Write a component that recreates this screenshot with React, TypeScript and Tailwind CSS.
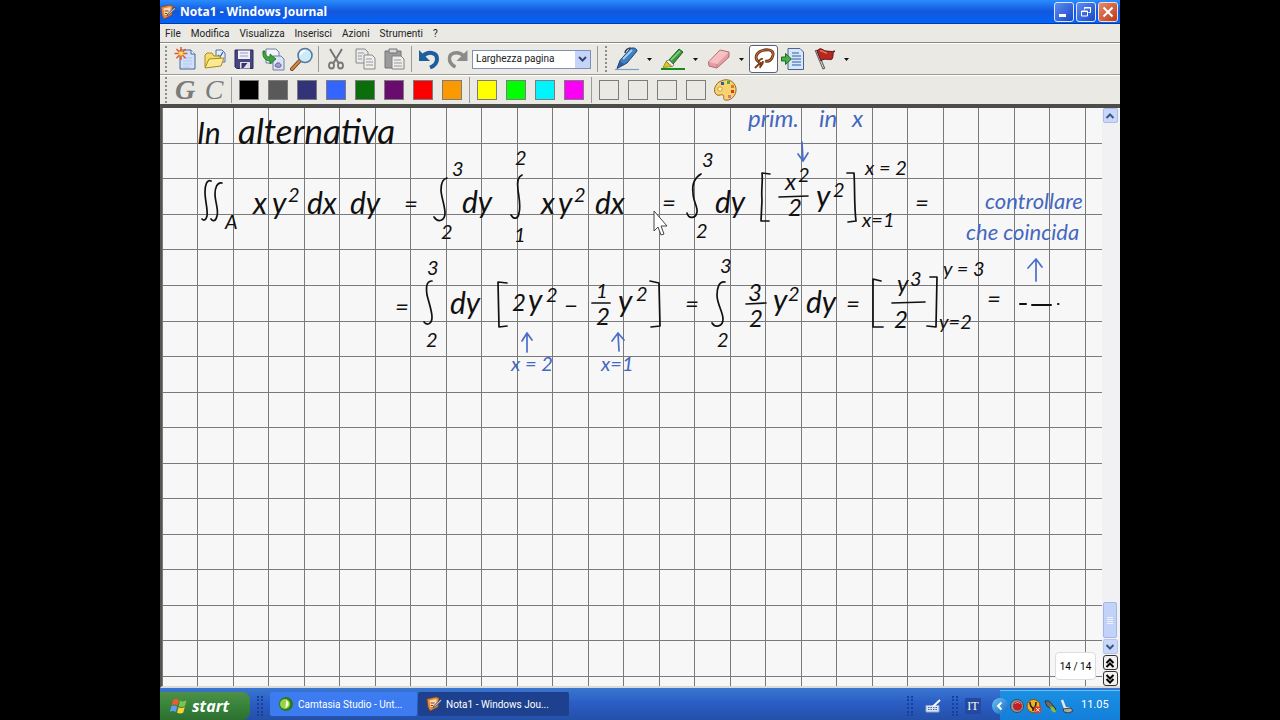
import React from "react";

type Kids = { children?: React.ReactNode };

const Icon = ({ children, size = "size-6" }: Kids & { size?: string }) => (
  <svg viewBox="0 0 24 24" className={`${size} shrink-0`} fill="none" aria-hidden="true">
    {children}
  </svg>
);

const Tool = ({ label, children, width = "w-[29px]" }: Kids & { label: string; width?: string }) => (
  <button aria-label={label} className={`flex h-7 shrink-0 items-center justify-center ${width}`}>
    {children}
  </button>
);

const Grip = () => (
  <div className="flex w-[11px] shrink-0 justify-center">
    <div className="h-[26px] border-l-2 border-dotted border-[#8d8d8a]" />
  </div>
);

const Sep = ({ width = "w-[5px]" }: { width?: string }) => (
  <div className={`flex shrink-0 justify-center ${width}`}>
    <div className="h-[26px] w-px bg-[#9a9a98]" />
  </div>
);

const More = ({ label }: { label: string }) => (
  <button aria-label={label} className="flex h-7 w-[15px] shrink-0 items-center justify-center">
    <svg viewBox="0 0 5 3" className="h-[3px] w-[5px]" aria-hidden="true">
      <path d="M0 0h5L2.500 3z" fill="#111" />
    </svg>
  </button>
);

const Swatch = ({ name, color }: { name: string; color: string }) => (
  <Tool label={name}>
    <span className={`block size-5 border border-[#7b7b80] ${color}`} />
  </Tool>
);

const JournalIcon = ({ size = "size-4" }: { size?: string }) => (
  <svg viewBox="0 0 16 16" className={`${size} shrink-0`} aria-hidden="true">
    <path d="M1 3l9-2 3 1-1 9-8 4-2-4z" fill="#e8893a" stroke="#8a3f12" strokeWidth=".7" />
    <path d="M3.500 4.500l7-1.500 0 4-4 4-2 0z" fill="#f8d9b8" />
    <path d="M4.500 7h4M5 9.500h2" stroke="#8a3f12" />
    <path d="M15 3L8 9.500l-1 2 2.200-.8L15.500 5z" fill="#b9c3d6" stroke="#333b55" strokeWidth=".7" />
  </svg>
);

const blacks = [
  ["Nero", "bg-black"],
  ["Grigio", "bg-[#595959]"],
  ["Blu scuro", "bg-[#333377]"],
  ["Blu", "bg-[#3366ff]"],
  ["Verde", "bg-[#0b6e0b]"],
  ["Viola", "bg-[#6a0c6e]"],
  ["Rosso", "bg-[#fb0000]"],
  ["Arancione", "bg-[#fb9a00]"],
];
const brights = [
  ["Giallo", "bg-[#ffff00]"],
  ["Verde chiaro", "bg-[#00ff00]"],
  ["Celeste", "bg-[#00f4fb]"],
  ["Fucsia", "bg-[#fb00f4]"],
];
const empties = ["Personalizzato 1", "Personalizzato 2", "Personalizzato 3", "Personalizzato 4"];

function TitleBar() {
  return (
    <header className="flex h-6 shrink-0 items-center border-b border-[#0b3a9c] bg-linear-to-b from-[#2b8cff] via-[#1257dc] to-[#0064fb] pr-[2px]">
      <JournalIcon />
      <h1 className="grow pl-1 font-['Noto_Sans'] text-[12px] leading-5 font-bold text-white">
        Nota1 - Windows Journal
      </h1>
      <div className="flex gap-[2px]">
        <button aria-label="Riduci a icona" className="flex size-5 items-end justify-start rounded-[3px] border border-[#dbe7ff] bg-linear-to-br from-[#5e8cf0] to-[#1947c9] p-1">
          <span className="h-[3px] w-[7px] bg-white" />
        </button>
        <button aria-label="Ripristina" className="flex size-5 items-center justify-center rounded-[3px] border border-[#dbe7ff] bg-linear-to-br from-[#5e8cf0] to-[#1947c9]">
          <svg viewBox="0 0 12 12" className="size-3" fill="none" stroke="white" aria-hidden="true">
            <path d="M4.500 3.500v-2h6v5h-2M4 2h7M1.500 5h6v5h-6zM1.500 5.500h6" />
          </svg>
        </button>
        <button aria-label="Chiudi" className="flex size-5 items-center justify-center rounded-[3px] border border-[#f5ddd5] bg-linear-to-br from-[#e58a6c] to-[#b93a15]">
          <svg viewBox="0 0 12 12" className="size-3" stroke="white" strokeWidth="2" aria-hidden="true">
            <path d="M1.500 1.500l9 9M10.500 1.500l-9 9" />
          </svg>
        </button>
      </div>
    </header>
  );
}

function MenuBar() {
  return (
    <nav className="flex h-[19px] shrink-0 items-center gap-[10px] border-b border-[#8a8a85] pl-[5px] text-[10px] text-[#222]">
      {["File", "Modifica", "Visualizza", "Inserisci", "Azioni", "Strumenti", "?"].map((m) => (
        <button key={m}>{m}</button>
      ))}
    </nav>
  );
}

function MainTools() {
  return (
    <div className="flex h-8 shrink-0 items-center border-t border-b border-t-white border-b-[#9b9b98]">
      <Grip />
      <Tool label="Nuova nota">
        <Icon>
          <path d="M6 3h11l4 4v15H6z" fill="#cfe0f8" stroke="#49659c" />
          <path d="M17 3v4h4" fill="#fff" stroke="#49659c" />
          <path d="M9 11h9M9 14h9M9 17h9M9 20h7" stroke="#a8c2ea" strokeWidth=".8" />
          <path d="M7 0v13M.5 6.500h13M2.400 2l9.200 9.200M11.600 2l-9.200 9.200" stroke="#e2592a" strokeWidth="1.500" />
          <circle cx="7" cy="6.500" r="2.300" fill="#ffd54a" />
        </Icon>
      </Tool>
      <Tool label="Apri">
        <Icon>
          <path d="M13 3h6l3 3v9h-9z" fill="#e6effb" stroke="#55709e" />
          <path d="M15 8l2 2 3-5" stroke="#2d66b8" strokeWidth="1.300" />
          <path d="M2 20V8l2-2h5l2 3h6v4" fill="#f5dc6c" stroke="#a98a22" />
          <path d="M2 21l4-9 15-1-3 8z" fill="#fbea8f" stroke="#a98a22" />
        </Icon>
      </Tool>
      <Tool label="Salva">
        <Icon>
          <path d="M3 3h18v18.500H5L3 20z" fill="#47457f" stroke="#2d2b5c" />
          <path d="M6 3.500h12V12H6z" fill="#f0f1f8" />
          <path d="M8 6h8M8 9h8" stroke="#9a9cc0" />
          <path d="M8 15h10v6.500H8z" fill="#dfe0ee" />
          <path d="M9.500 16h6l-4 5h-2z" fill="#35336b" />
        </Icon>
      </Tool>
      <Tool label="Importa">
        <Icon>
          <path d="M5 2h10l3 3v11H5z" fill="#f2f5fb" stroke="#6d7ea6" />
          <path d="M12 9h8l3 3v11H12z" fill="#d8e3f6" stroke="#6d7ea6" />
          <path d="M14 19c1-4 5-4 6-1s-4 3-6 1z" fill="#a79ac6" stroke="#6e5c94" />
          <path d="M2 4c-1 7 3 10 7 10v3l6-5-6-5v3c-3 0-5-2-5-6z" fill="#3ba63a" stroke="#1b6b22" strokeWidth=".8" />
        </Icon>
      </Tool>
      <Tool label="Trova">
        <Icon>
          <path d="M10 13.500l-8 8.500" stroke="#6d3c13" strokeWidth="4" strokeLinecap="round" />
          <path d="M10 13.500l-8 8.500" stroke="#d38a43" strokeWidth="2.200" strokeLinecap="round" />
          <circle cx="15" cy="8.500" r="7" fill="#cdeaf9" stroke="#57799f" strokeWidth="1.600" />
          <path d="M10.500 8a4.500 4.500 0 0 1 5-4" stroke="#fff" strokeWidth="1.800" />
        </Icon>
      </Tool>
      <Sep />
      <Tool label="Taglia">
        <Icon>
          <path d="M6 2l8.500 14M18 2L9.500 16" stroke="#777" strokeWidth="2" />
          <ellipse cx="7.500" cy="18.500" rx="2.500" ry="3" stroke="#777" strokeWidth="1.800" />
          <ellipse cx="16.500" cy="18.500" rx="2.500" ry="3" stroke="#777" strokeWidth="1.800" />
        </Icon>
      </Tool>
      <Tool label="Copia">
        <Icon>
          <path d="M3 2h9l3 3v11H3z" fill="#e9e9e9" stroke="#888" />
          <path d="M5 6h6M5 9h4M5 12h4" stroke="#999" />
          <path d="M11 8h8l3 3v11H11z" fill="#eee" stroke="#888" />
          <path d="M13 12h6M13 15h7M13 18h7" stroke="#999" />
        </Icon>
      </Tool>
      <Tool label="Incolla">
        <Icon>
          <path d="M3 4h16v17H3z" fill="#9b9b9b" stroke="#757575" />
          <path d="M7 2h8v4H7z" fill="#d8d8d8" stroke="#757575" />
          <path d="M10 9h9l3 3v10H10z" fill="#eee" stroke="#808080" />
          <path d="M12 13h7M12 16h8M12 19h8" stroke="#999" />
        </Icon>
      </Tool>
      <Sep width="w-[6px]" />
      <Tool label="Annulla">
        <Icon>
          <path d="M6 9c5-5 14-4 14 3 0 5-3 7-7 8.500" stroke="#1d5e9f" strokeWidth="4" />
          <path d="M2 3v11h11z" fill="#1d5e9f" />
        </Icon>
      </Tool>
      <Tool label="Ripeti">
        <Icon>
          <path d="M18 9C12 3 3 6 3.500 12c0 4 2 6 6 8" stroke="#8b8b8b" strokeWidth="3.500" />
          <path d="M21.500 3v11h-11z" fill="#8b8b8b" />
        </Icon>
      </Tool>
      <div className="grid h-[19px] w-[119px] shrink-0 items-center border border-[#7d90b8] bg-white">
        <select aria-label="Zoom" className="col-start-1 row-start-1 h-full w-full appearance-none bg-transparent pl-[3px] text-[10px] leading-4 text-[#222] outline-none">
          <option>Larghezza pagina</option>
        </select>
        <span className="pointer-events-none col-start-1 row-start-1 flex h-full w-[15px] items-center justify-center justify-self-end bg-[#c5d4f8]">
          <svg viewBox="0 0 9 6" className="h-[6px] w-[9px]" fill="none" stroke="#34466f" strokeWidth="2" aria-hidden="true">
            <path d="M1 1l3.500 3.500L8 1" />
          </svg>
        </span>
      </div>
      <div className="w-1 shrink-0" />
      <Sep />
      <Grip />
      <Tool label="Penna" width="w-[31px]">
        <Icon>
          <path d="M0 22.500h24" stroke="#7f9cc6" strokeWidth="1.200" />
          <path d="M2 21.500l3-8L15 2c2-2 7-1 7 2L12 16z" fill="#3f82c4" stroke="#1c3d6d" />
          <path d="M8 12l9-9" stroke="#a9cdf0" strokeWidth="2" />
          <path d="M2 21.500l3-7 5 3z" fill="#2f5c93" />
          <path d="M10 6c0-3 3-5 6-5" stroke="#333d55" strokeWidth="1.500" />
        </Icon>
      </Tool>
      <More label="Opzioni penna" />
      <Tool label="Evidenziatore" width="w-[31px]">
        <Icon>
          <path d="M0 22h24" stroke="#168b1d" strokeWidth="2" />
          <path d="M7 14L18 2l4 3-10 12z" fill="#3c9b3e" stroke="#1a5e20" />
          <path d="M10 13l9-9" stroke="#8fd48b" strokeWidth="1.500" />
          <path d="M5 14l3-1 5 5-2 2z" fill="#eef0e6" stroke="#777" strokeWidth=".8" />
          <path d="M2 20.500l3-6 6 5z" fill="#e0c51c" stroke="#84761a" strokeWidth=".7" />
        </Icon>
      </Tool>
      <More label="Opzioni evidenziatore" />
      <Tool label="Gomma" width="w-[31px]">
        <Icon>
          <path d="M1.500 15L13 3l9 2v5L10 21l-8-2z" fill="#e79da3" stroke="#b0676f" />
          <path d="M2 15L13 3.500l8.500 2L10 17z" fill="#f6bfc2" />
          <path d="M10 17v4" stroke="#c87b82" />
        </Icon>
      </Tool>
      <More label="Opzioni gomma" />
      <button aria-label="Strumento selezione" aria-pressed="true" className="flex h-7 w-[29px] shrink-0 items-center justify-center rounded-[3px] border border-[#55617d] bg-white">
        <Icon>
          <path d="M7 15C2 12 4 6 9 4s13-2 12 4c-1 5-4 7-8 6" stroke="#622b10" strokeWidth="2.800" />
          <path d="M7 15C2 12 4 6 9 4s13-2 12 4c-1 5-4 7-8 6" stroke="#c07136" strokeWidth="1.200" />
          <path d="M11 12c-3-1-5 3-4 5l-4 4M9 15l-1 6M11 14c0 3-1 4-2 5" stroke="#7d3b16" strokeWidth="1.800" />
        </Icon>
      </button>
      <Tool label="Inserisci spazio">
        <Icon>
          <path d="M7 1.500h12l3.500 3.500v17.500H7z" fill="#d7e6fa" stroke="#4a6294" />
          <path d="M11 6h7M11 9h9M11 12h9M11 15h9M11 18h9" stroke="#315c9f" strokeWidth="1.200" />
          <path d="M.5 10h4V6.500L10.500 12l-6 5.500V14h-4z" fill="#48ae45" stroke="#1c6a27" />
        </Icon>
      </Tool>
      <div className="w-[3px] shrink-0" />
      <Tool label="Contrassegno">
        <Icon>
          <path d="M3 3l8 19" stroke="#5e5e66" strokeWidth="3" />
          <path d="M3.500 4l7 17" stroke="#d8d8df" />
          <path d="M4 4c4-5 6 0 9 0 3 0 5 1 9 0-3 2-1 5-3 8-3 2-7-2-11 2z" fill="#b5281f" stroke="#5f1410" />
          <path d="M7 4c3-1 4 2 7 2" stroke="#e27464" strokeWidth="1.500" />
        </Icon>
      </Tool>
      <More label="Opzioni contrassegno" />
    </div>
  );
}

function ColorTools() {
  return (
    <div className="flex h-[29px] shrink-0 items-center border-t border-white">
      <Grip />
      <button aria-label="Grassetto" className="w-7 shrink-0 font-['Liberation_Serif',serif] text-[28px] leading-7 font-bold text-[#7b7b7b] italic">
        G
      </button>
      <button aria-label="Corsivo" className="w-[30px] shrink-0 font-['Liberation_Serif',serif] text-[28px] leading-7 text-[#7b7b7b] italic">
        C
      </button>
      <Sep />
      {blacks.map(([n, c]) => (
        <Swatch key={n} name={n} color={c} />
      ))}
      <Sep width="w-[6px]" />
      {brights.map(([n, c]) => (
        <Swatch key={n} name={n} color={c} />
      ))}
      <Sep width="w-[6px]" />
      {empties.map((n) => (
        <Swatch key={n} name={n} color="bg-transparent" />
      ))}
      <Tool label="Altri colori">
        <Icon>
          <path d="M8 3c8-4 16 2 15 10-1 7-7 10-11 9-3-1 0-4-2-5s-3 1-6 0C-1 14 2 5 8 3z" fill="#f7d36c" stroke="#9a6a21" />
          <circle cx="7" cy="11" r="2.200" fill="#fff6c8" stroke="#b98b31" strokeWidth=".8" />
          <path d="M8 4h3v3H8z" fill="#2a5cab" />
          <path d="M14 3h3v3h-3z" fill="#4eab3f" />
          <path d="M18 7h3v3h-3z" fill="#e07820" />
          <path d="M18 12h3v3h-3z" fill="#cf3a2b" />
          <path d="M15 17h3v3h-3z" fill="#e36aa5" />
        </Icon>
      </Tool>
    </div>
  );
}

/* Ruling pitch is about 35.5px, snapped to whole pixels. */
const columns = Array.from({ length: 60 }, (_, i) => Math.round(35.4 + (i - 1) * 35.5));
const rows = Array.from({ length: 40 }, (_, i) => Math.round(34.9 + i * 35.52));

type Mark = [x: number, y: number, text: string, size?: "s" | "n" | "m" | "l" | "xl"];

const sizes = {
  s: "text-[20px]",
  n: "text-[22px]",
  m: "text-[24px]",
  l: "text-[30px]",
  xl: "text-[35px]",
};

const ink: Mark[] = [
  [197, 144, "In", "l"],
  [238, 144, "alternativa", "xl"],
  [225, 229, "A", "s"],
  [253, 214, "x", "l"],
  [272, 214, "y", "l"],
  [288, 202, "2", "s"],
  [307, 214, "dx", "l"],
  [350, 214, "dy", "l"],
  [404, 212, "="],
  [452, 176, "3", "s"],
  [441, 239, "2", "s"],
  [462, 213, "dy", "l"],
  [515, 165, "2", "s"],
  [514, 242, "1", "s"],
  [541, 214, "x", "l"],
  [558, 214, "y", "l"],
  [574, 202, "2", "s"],
  [595, 214, "dx", "l"],
  [662, 211, "="],
  [702, 167, "3", "s"],
  [696, 238, "2", "s"],
  [715, 213, "dy", "l"],
  [785, 190, "x", "m"],
  [798, 182, "2", "s"],
  [788, 216, "2", "m"],
  [816, 207, "y", "l"],
  [833, 197, "2", "s"],
  [865, 175, "x = 2", "s"],
  [862, 227, "x=1", "s"],
  [915, 211, "="],
  [395, 315, "="],
  [427, 275, "3", "s"],
  [426, 347, "2", "s"],
  [450, 314, "dy", "l"],
  [512, 311, "2", "m"],
  [528, 311, "y", "l"],
  [546, 302, "2", "s"],
  [564, 314, "−"],
  [596, 298, "1", "s"],
  [596, 325, "2", "m"],
  [618, 312, "y", "l"],
  [636, 301, "2", "s"],
  [685, 312, "="],
  [720, 273, "3", "s"],
  [717, 347, "2", "s"],
  [748, 301, "3", "m"],
  [749, 327, "2", "m"],
  [773, 311, "y", "l"],
  [788, 301, "2", "s"],
  [806, 313, "dy", "l"],
  [846, 312, "="],
  [897, 292, "y", "m"],
  [910, 286, "3", "s"],
  [894, 328, "2", "m"],
  [943, 276, "y = 3", "s"],
  [939, 329, "y=2", "s"],
  [987, 307, "="],
];

const blueInk: Mark[] = [
  [748, 127, "prim.", "m"],
  [819, 127, "in", "m"],
  [852, 127, "x", "m"],
  [985, 209, "controllare", "n"],
  [966, 240, "che coincida", "n"],
  [511, 371, "x = 2", "s"],
  [601, 371, "x=1", "s"],
];

const Marks = ({ list }: { list: Mark[] }) => (
  <>
    {list.map(([x, y, t, s = "m"]) => (
      <text key={`${x}-${y}`} x={x} y={y} className={sizes[s]}>
        {t}
      </text>
    ))}
  </>
);

function Page() {
  return (
    <main className="relative min-w-0 grow bg-[#f8f7f8]">
      <svg className="absolute inset-0 size-full" shapeRendering="crispEdges" stroke="#7b7a7b" aria-hidden="true">
        {columns.map((x) => (
          <line key={x} x1={x + 0.5} x2={x + 0.5} y1="0" y2="100%" />
        ))}
        {rows.map((y) => (
          <line key={y} x1="0" x2="100%" y1={y + 0.5} y2={y + 0.5} />
        ))}
      </svg>
      <svg viewBox="162 108 940 578" className="absolute top-0 left-0 h-[578px] w-[940px] overflow-visible font-['Lato',sans-serif] font-normal italic">
        <g fill="#111">
          <Marks list={ink} />
        </g>
        <g fill="#4468bd">
          <Marks list={blueInk} />
        </g>
        <g fill="none" stroke="#111" strokeWidth="1.700" strokeLinecap="round" strokeLinejoin="round">
          <path d="M211 181c-4-2-6 4-6 11 0 9 3 17 2 24-1 4-3 5-5 3M222 183c-5-1-7 5-7 11 0 8 4 16 2 22-1 5-4 6-6 3" />
          <path d="M447 178c-5 1-6 6-6 12s4 16 4 23c0 8-7 10-11 4" />
          <path d="M522 175c-5 2-5 8-4 15 1 8 3 17 1 23-1 6-5 7-8 2" />
          <path d="M701 174c-7 4-9 11-8 19 0 8 5 14 4 19-1 6-8 8-10 1" />
          <path d="M432 281c-6 0-6 7-5 14 2 8 5 16 5 22 0 7-5 9-8 5" />
          <path d="M725 282c-6-1-8 6-8 13 0 9 6 17 6 24 0 8-8 9-11 4" />
          <path d="M770 174l-8-1c1 8-1 17 0 27l-1 21h8" />
          <path d="M847 173h7c1 15 0 32 2 48l-8 1" />
          <path d="M507 283l-9-1 1 45 8-1" />
          <path d="M650 281l9 2 1 43-9 1" />
          <path d="M881 281l-8-2v48l10 0" />
          <path d="M930 277l7 0-1 50-9-1" />
          <path d="M779 197l29-1M592 303l18 0M746 304l20-1M892 303l33-1" />
          <path d="M1020 304h6M1032 305h19M1058 304h.5" strokeWidth="2" />
        </g>
        <g fill="none" stroke="#4a6fc8" strokeWidth="1.700" strokeLinecap="round" strokeLinejoin="round">
          <path d="M802 142l1 19M798 154l5 7 5-8" />
          <path d="M527 352l0-19M522 341l5-8 5 7" />
          <path d="M619 351l-1-18M612 341l6-8 6 7" />
          <path d="M1036 281v-21M1028 268l8-9 6 8" />
        </g>
        <path d="M654 211v20l4-4 3 8 3-1-3-8h6z" fill="#fff" stroke="#444" />
      </svg>
      <div className="absolute right-[6px] bottom-[6px] flex h-7 w-[41px] items-center justify-center rounded-[4px] border border-[#ddd] bg-white text-[10px] text-black">
        14 / 14
      </div>
    </main>
  );
}

const Chevron = ({ d }: { d: string }) => (
  <svg viewBox="0 0 10 10" className="size-[10px]" fill="none" stroke="currentColor" strokeWidth="2" aria-hidden="true">
    <path d={d} />
  </svg>
);

function Scrollbar() {
  return (
    <aside className="flex w-[18px] shrink-0 flex-col items-center gap-px bg-[#f1f0f2] pr-[2px]">
      <button aria-label="Scorri su" className="flex h-[15px] w-[15px] shrink-0 items-center justify-center rounded-[2px] border border-[#a9bde8] bg-[#c9d8f9] text-[#3d558c]">
        <Chevron d="M1.500 7L5 3.500 8.500 7" />
      </button>
      <div className="grow" />
      <div className="flex h-9 w-[14px] shrink-0 flex-col items-center justify-center gap-px rounded-[2px] border border-[#a3b6e4] bg-[#c3d2f9]">
        {[0, 1, 2, 3].map((i) => (
          <span key={i} className="h-px w-[6px] bg-[#eef3ff]" />
        ))}
      </div>
      <button aria-label="Scorri giù" className="flex h-[15px] w-[15px] shrink-0 items-center justify-center rounded-[2px] border border-[#b5c6ee] bg-[#c9d8f9] text-[#3d558c]">
        <Chevron d="M1.500 3L5 6.500 8.500 3" />
      </button>
      <button aria-label="Pagina precedente" className="flex h-[15px] w-[15px] shrink-0 items-center justify-center rounded-[3px] border border-[#333] bg-[#f1f0ee] text-black">
        <Chevron d="M1.500 5L5 1.500 8.500 5M1.500 9L5 5.500 8.500 9" />
      </button>
      <button aria-label="Pagina successiva" className="flex h-[15px] w-[15px] shrink-0 items-center justify-center rounded-[3px] border border-[#333] bg-[#f1f0ee] text-black">
        <Chevron d="M1.500 1L5 4.500 8.500 1M1.500 5L5 8.500 8.500 5" />
      </button>
    </aside>
  );
}

const TaskGrip = () => (
  <div className="flex w-5 shrink-0 justify-center gap-[2px]">
    <span className="h-5 border-l-2 border-dotted border-[#17409b]" />
    <span className="h-5 border-l-2 border-dotted border-[#17409b]" />
  </div>
);

function Taskbar() {
  return (
    <footer className="flex h-8 shrink-0 items-end bg-linear-to-b from-[#3a76cf] via-[#2a5cc4] to-[#2450a8] text-[10px] text-white">
      <button className="flex h-7 w-[90px] shrink-0 items-center gap-1 rounded-r-[8px] bg-linear-to-b from-[#4e9048] via-[#36833a] to-[#2d6f30] pl-[10px] font-['Open_Sans'] text-[16px] font-bold italic">
        <svg viewBox="0 0 18 18" className="size-[18px]" aria-hidden="true">
          <path d="M3 3c2-1.500 4-1.500 6 0L7.500 8.500c-2-1.300-4-1.300-6 0z" fill="#ee5a2b" />
          <path d="M10 3.500c2 1.200 4 1.200 6.500-.2L15 9c-2 1.200-4 1.200-6.300.2z" fill="#7cc54a" />
          <path d="M1.200 9.500c2-1.300 4-1.300 6 0L5.800 15c-2-1.300-4-1.300-6 0z" fill="#5f9df0" />
          <path d="M8.500 10.200c2 1 4 1 6.300-.2l-1.500 5.600c-2 1.200-4 1.200-6.300.2z" fill="#fbd03b" />
        </svg>
        start
      </button>
      <div className="flex h-7 items-center">
        <TaskGrip />
      </div>
      <button className="flex h-6 w-[147px] shrink-0 items-center gap-1 self-center rounded-[2px] bg-[#3c7cf0] pl-2">
        <svg viewBox="0 0 16 16" className="size-4" aria-hidden="true">
          <circle cx="8" cy="8" r="7" fill="#2b7a22" />
          <circle cx="7" cy="8" r="5" fill="#9bd23f" />
          <path d="M8 4c4 2 3 7-1 8 1-3 1-5 1-8z" fill="#f3f8e8" />
        </svg>
        <span>Camtasia Studio - Unt...</span>
      </button>
      <button className="ml-px flex h-6 w-[151px] shrink-0 items-center gap-1 self-center rounded-[2px] bg-[#1d418e] pl-2">
        <JournalIcon />
        <span>Nota1 - Windows Jou...</span>
      </button>
      <div className="grow" />
      <div className="flex h-7 shrink-0 items-center">
        <TaskGrip />
        <button aria-label="Pannello input" className="flex w-[25px] justify-center">
          <svg viewBox="0 0 16 14" className="h-[14px] w-4" fill="none" aria-hidden="true">
            <path d="M1 6.500h13V13H1z" fill="#dce6f5" stroke="#8fa6cf" />
            <path d="M3 8.500h9M3 10.500h9" stroke="#4b669e" strokeDasharray="1.500 1" />
            <path d="M15 1L8 7.500" stroke="#fff" strokeWidth="1.800" />
          </svg>
        </button>
        <TaskGrip />
        <button className="flex h-4 w-4 items-center justify-center bg-[#234a9d] font-['Liberation_Serif',serif] text-[12px]">IT</button>
      </div>
      <div className="relative ml-[19px] flex h-[30px] w-[120px] shrink-0 items-center border-t border-[#5fc3f5] bg-linear-to-b from-[#1b8fe4] to-[#137fd8] pl-[9px]">
        <button aria-label="Mostra icone nascoste" className="absolute -left-2 flex size-4 items-center justify-center rounded-full bg-linear-to-br from-[#6cc3f5] to-[#1168c4] text-white">
          <Chevron d="M6.500 1.500L3 5l3.500 3.500" />
        </button>
        <svg viewBox="0 0 66 16" className="h-4 w-[66px]" fill="none" aria-hidden="true">
          <circle cx="8" cy="8" r="6.500" fill="#8d979f" stroke="#3e4650" />
          <circle cx="8.500" cy="8" r="4.500" fill="#c11f25" />
          <path d="M6 6c1-2 4-2 5 0" stroke="#f2a0a0" />
          <circle cx="24.500" cy="8" r="6.500" fill="#efb325" stroke="#7a5714" />
          <path d="M21 4c0 4 1 5 3 6s3-3 3-6M24 10v3" stroke="#2d2616" strokeWidth="1.600" />
          <path d="M25.500 8.500h6.500v6.500h-6.500z" fill="#df3b26" />
          <path d="M27 10l3.500 3.500M30.500 10L27 13.500" stroke="#fff" />
          <path d="M36 3l4 0 7 8-2 2-7-5z" fill="#6c7068" stroke="#2e332e" />
          <path d="M41 9c3-1 5 1 6 5-3 1-5-1-6-5z" fill="#8dbb36" />
          <path d="M53 2l3 8 5 1" stroke="#e8e8e8" strokeWidth="2.500" />
          <path d="M54 11l8-1 2 3-4 2-5-1z" fill="#a9aaa2" stroke="#3b3f42" />
        </svg>
        <time className="pl-[6px] text-[11px]">11.05</time>
      </div>
    </footer>
  );
}

export default function App() {
  return (
    <div className="flex h-screen justify-center bg-black font-['Roboto',sans-serif]">
      <div className="flex h-full w-3/4 flex-col overflow-hidden bg-[#ebe9e4]">
        <TitleBar />
        <MenuBar />
        <MainTools />
        <ColorTools />
        <div className="flex min-h-0 grow border-t-4 border-b-2 border-l-2 border-t-[#4c4c48] border-b-[#dcdad5] border-l-[#55554f]">
          <Page />
          <Scrollbar />
        </div>
        <Taskbar />
      </div>
    </div>
  );
}
